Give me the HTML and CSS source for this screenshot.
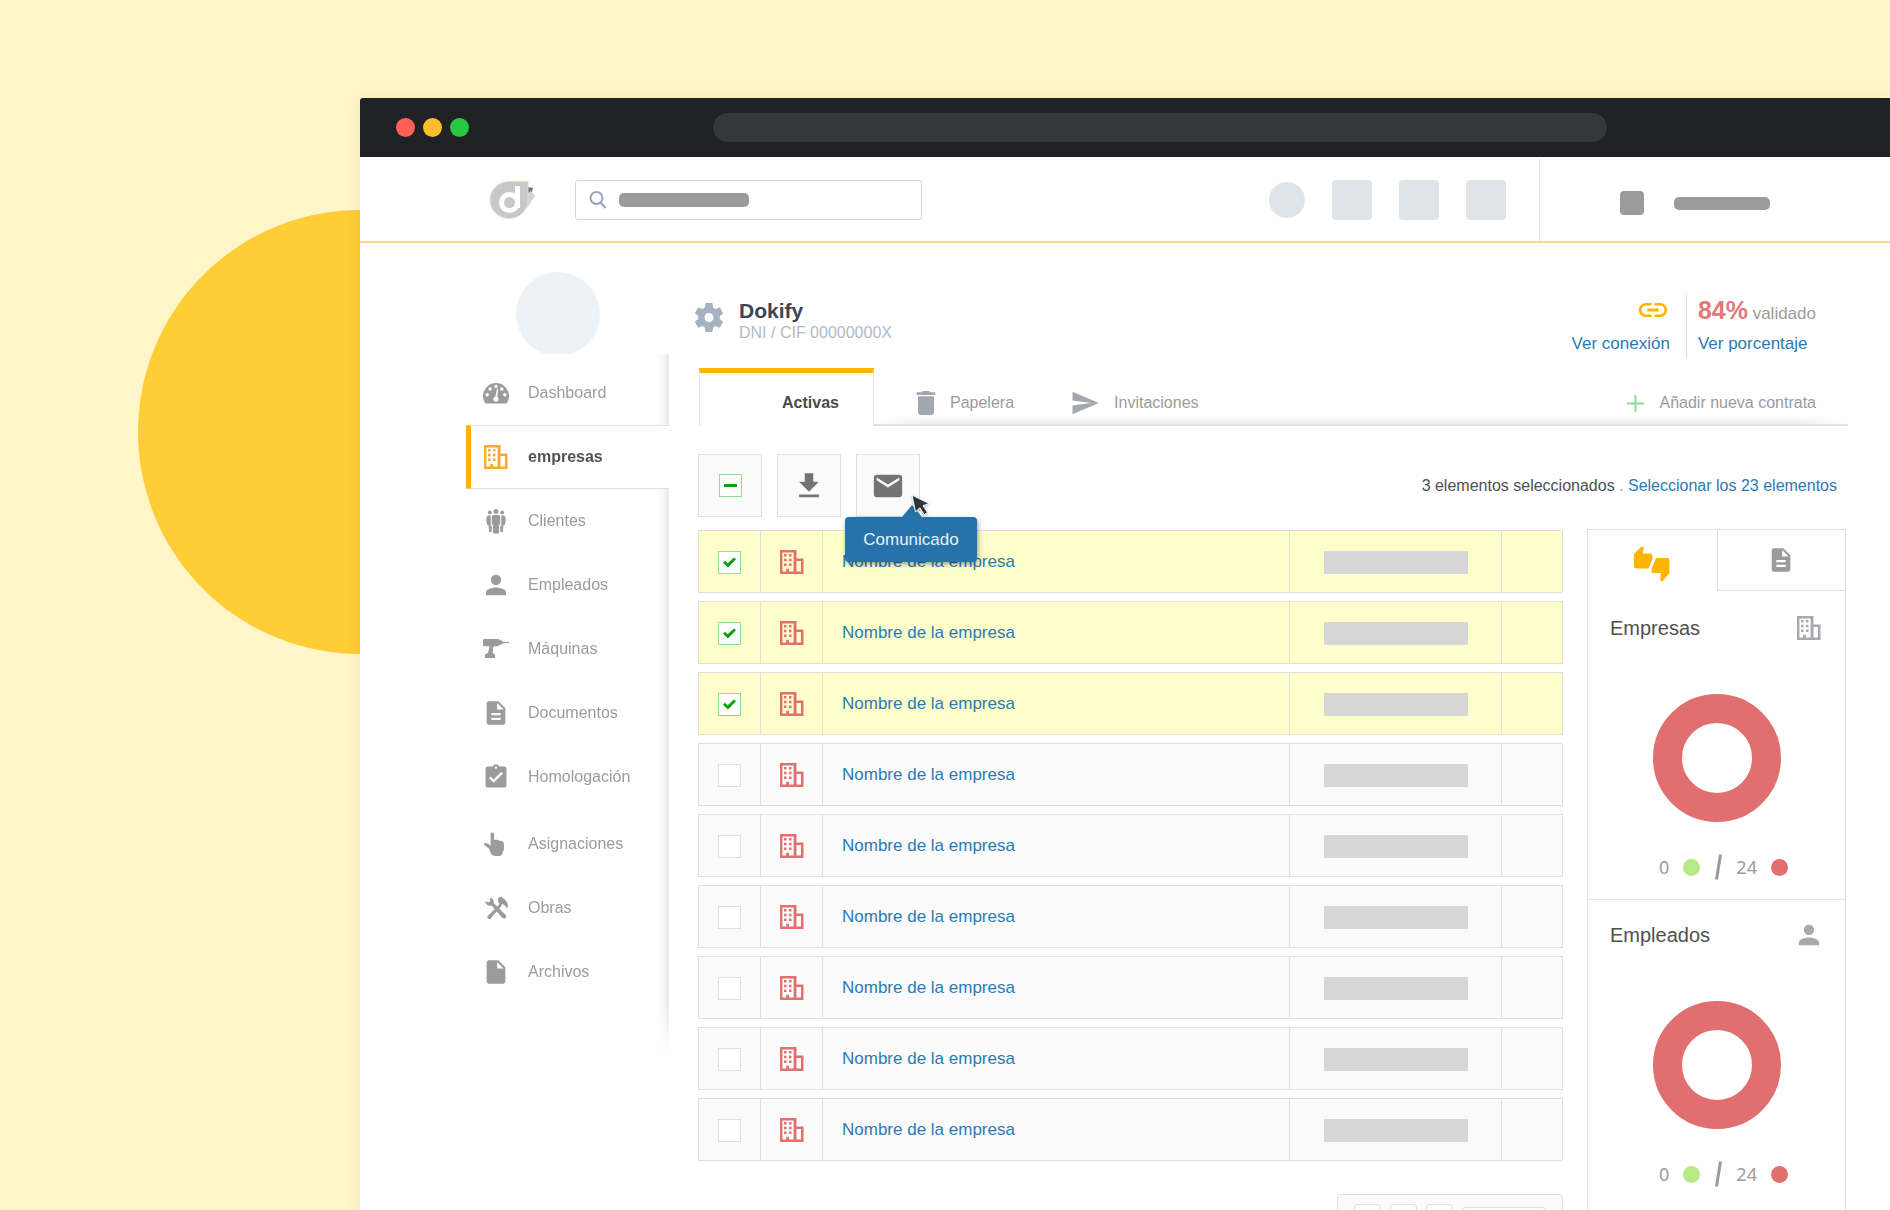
FILE: index.html
```html
<!DOCTYPE html>
<html lang="es">
<head>
  <meta charset="UTF-8">
  <meta name="viewport" content="width=device-width, initial-scale=1.0">
  <title>Dokify - Empresas</title>
  <link rel="stylesheet" href="styles.css">
</head>
<body>
  <!-- Icon sprite -->
  <svg class="sprite" aria-hidden="true">
    <symbol id="i-building" viewBox="-2 -2 28 28">
      <path fill-rule="evenodd" d="M0 0h16.500v8.500h7V24H0zM2.400 2.400v19.200h3.800v-2.800h2.800v2.800h4.600V2.400zM16.500 11v10.600H21V11z"/>
      <path d="M4 4h2.500v2.500H4zM9 4h2.500v2.500H9zM4 8.800h2.500v2.500H4zM9 8.800h2.500v2.500H9zM4 13.600h2.500v2.500H4zM9 13.600h2.500v2.500H9z"/>
    </symbol>
    <symbol id="i-gauge" viewBox="0 0 28 28">
      <path fill-rule="evenodd" d="M3.300 24.500A13 13 0 1 1 24.700 24.500zM14 5.800a1.700 1.700 0 1 0 .01 0zM8.200 8.300a1.700 1.700 0 1 0 .01 0zM19.800 8.300a1.700 1.700 0 1 0 .01 0zM5.200 14a1.700 1.700 0 1 0 .01 0zM22.800 14a1.700 1.700 0 1 0 .01 0zM15 10l-1.700 7.700a2.600 2.600 0 1 0 2 .3l.9-7.800z"/>
    </symbol>
    <symbol id="i-group" viewBox="0 0 28 28">
      <circle cx="14" cy="4.500" r="2.500"/><circle cx="7.800" cy="5.500" r="1.900"/><circle cx="20.200" cy="5.500" r="1.900"/>
      <path d="M11.500 8h5q1.700 0 1.700 1.700V17q0 1-1.100 1v7.500q0 1-1 1H11.900q-1 0-1-1V18q-1.100 0-1.100-1V9.700Q9.800 8 11.500 8zM6.500 8.500h2.200v9.800l1 .9V25H7.200L6.500 18H5.300q-1-3.500-1-7 0-2.500 2.200-2.500zM21.500 8.500h-2.200v9.800l-1 .9V25h2.500l.7-7h1.200q1-3.500 1-7 0-2.500-2.200-2.500z"/>
    </symbol>
    <symbol id="i-person" viewBox="1 1 22 22">
      <path d="M12 12c2.210 0 4-1.790 4-4s-1.790-4-4-4-4 1.790-4 4 1.790 4 4 4zm0 2c-2.670 0-8 1.340-8 4v2h16v-2c0-2.660-5.330-4-8-4z"/>
    </symbol>
    <symbol id="i-drill" viewBox="0 0 28 28">
      <path d="M1 5q0-1 1-1h14.500q.8 0 .8 1l3 .6v1.100l6.700.4v.8l-6.700.4v1.100l-3 .4q-.2 1.400-1.200 1.400h-4.300l-1.200 2 .6 1.700-.6 3.200 2.400 1.400V23H3v-3.500l2.800-1.400 1-3.100.6-3.800H2q-1 0-1-1z"/>
    </symbol>
    <symbol id="i-doc" viewBox="0 0 24 24">
      <path d="M14 2H6c-1.100 0-1.990.9-1.990 2L4 20c0 1.100.89 2 1.990 2H18c1.100 0 2-.9 2-2V8l-6-6zm2 16H8v-2h8v2zm0-4H8v-2h8v2zm-3-5V3.500L18.500 9H13z"/>
    </symbol>
    <symbol id="i-clipboard" viewBox="0 0 24 24">
      <path d="M19 3h-4.180C14.400 1.840 13.300 1 12 1c-1.300 0-2.400.84-2.820 2H5c-1.100 0-2 .9-2 2v14c0 1.100.9 2 2 2h14c1.100 0 2-.9 2-2V5c0-1.100-.9-2-2-2zm-7 0c.55 0 1 .45 1 1s-.45 1-1 1-1-.45-1-1 .45-1 1-1zm-2 14l-4-4 1.410-1.410L10 14.170l6.590-6.590L18 9l-8 8z"/>
    </symbol>
    <symbol id="i-hand" viewBox="0 0 28 28">
      <path d="M8.600 3.300q1.700-1.600 3.300 0l.3 6.700q3.800-.6 5.300.8 4.300-.2 4.300 2.600.7 6-1 8.600-.5 4-3.800 4h-4.500q-2.700-.6-4-3.500l-1.500-4L2 15q-.5-2 1.500-2 2.500.2 5.100 2.500z"/>
    </symbol>
    <symbol id="i-tools" viewBox="0 0 28 28">
      <path d="M3 7.200l3.300 1.300 1.900-1.500-.3-3.300q3 .1 3.800 2.500.4 1.500-.2 2.800L24 21.300q.8 2.400-1.500 3.300-1.300 0-2-.7L9.600 11.500Q4.500 12.500 3 7.200zM16 5l1-1.800 2.500-.7 1 1.500q4.500 2 5.500 7.500l-1.200 3q-1.500-3.500-4-4.500l-1.500 1.300-3-2.600zM17.800 9.700l2 1.800L8.200 25q-2.800.6-3-2.200z"/>
    </symbol>
    <symbol id="i-file" viewBox="0 0 24 24">
      <path d="M6 2c-1.100 0-1.990.9-1.990 2L4 20c0 1.100.89 2 1.990 2H18c1.100 0 2-.9 2-2V8l-6-6H6zm7 7V3.500L18.500 9H13z"/>
    </symbol>
    <symbol id="i-gear" viewBox="2 2 20 20">
      <path d="M19.140 12.940c.04-.3.060-.61.060-.94s-.02-.64-.07-.94l2.030-1.580c.18-.14.23-.41.120-.61l-1.920-3.320c-.12-.22-.37-.29-.59-.22l-2.390.96c-.5-.38-1.030-.7-1.620-.94L14.400 2.810c-.04-.24-.24-.41-.48-.41h-3.840c-.24 0-.43.17-.47.41L9.250 5.350c-.59.24-1.130.57-1.620.94l-2.390-.96c-.22-.08-.47 0-.59.22L2.740 8.870c-.12.21-.08.470.12.610l2.030 1.580c-.05.3-.09.63-.09.94s.02.64.07.94l-2.030 1.580c-.18.140-.23.410-.12.610l1.920 3.320c.12.220.37.290.59.220l2.390-.96c.5.380 1.030.7 1.620.94l.36 2.540c.05.240.24.410.48.410h3.840c.24 0 .44-.17.47-.41l.36-2.540c.59-.24 1.130-.56 1.620-.94l2.390.96c.22.080.47 0 .59-.22l1.920-3.320c.12-.22.070-.47-.12-.61l-2.010-1.580zM12 15c-1.650 0-3-1.350-3-3s1.350-3 3-3 3 1.350 3 3-1.350 3-3 3z"/>
    </symbol>
    <symbol id="i-trash" viewBox="0 0 24 24">
      <path d="M6 19c0 1.100.9 2 2 2h8c1.100 0 2-.9 2-2V7H6v12zM19 4h-3.500l-1-1h-5l-1 1H5v2h14V4z"/>
    </symbol>
    <symbol id="i-send" viewBox="0 0 24 24">
      <path d="M2.010 21L23 12 2.010 3 2 10l15 2-15 2z"/>
    </symbol>
    <symbol id="i-download" viewBox="0 0 24 24">
      <path d="M19 9h-4V3H9v6H5l7 7 7-7zM5 18v2h14v-2H5z"/>
    </symbol>
    <symbol id="i-mail" viewBox="0 0 24 24">
      <path d="M20 4H4c-1.100 0-1.990.9-1.990 2L2 18c0 1.100.9 2 2 2h16c1.100 0 2-.9 2-2V6c0-1.100-.9-2-2-2zm0 4l-8 5-8-5V6l8 5 8-5v2z"/>
    </symbol>
    <symbol id="i-link" viewBox="0 0 24 24">
      <path d="M3.900 12c0-1.710 1.390-3.100 3.100-3.100h4V7H7c-2.760 0-5 2.240-5 5s2.240 5 5 5h4v-1.900H7c-1.710 0-3.100-1.390-3.100-3.100zM8 13h8v-2H8v2zm9-6h-4v1.900h4c1.710 0 3.100 1.390 3.100 3.100s-1.390 3.100-3.100 3.100h-4V17h4c2.760 0 5-2.240 5-5s-2.240-5-5-5z"/>
    </symbol>
    <symbol id="i-thumbs" viewBox="0 0 24 24">
      <path d="M12 6c0-.55-.45-1-1-1H5.820l.66-3.180.02-.23c0-.31-.13-.59-.33-.8L5.380 0 .44 4.940C.17 5.210 0 5.590 0 6v7.500c0 .83.67 1.500 1.500 1.500h7.250c.62 0 1.150-.38 1.380-.91l2-5.290c.07-.17.11-.36.11-.55V6zm10.500 2h-6.750c-.62 0-1.150.38-1.380.91l-2.600 6.290c-.07.17-.11.36-.11.55V17c0 .55.45 1 1 1h5.180l-.3 4.180-.02.24c0 .31.13.59.33.8l.79.78 4.580-5.440c.27-.27.44-.65.44-1.060v-8c0-.83-.67-1.500-1.500-1.500z"/>
    </symbol>
  </svg>

  <div class="hero">
    <div class="sun"></div>

    <div class="window">
      <div class="titlebar">
        <div class="dots">
          <span class="dot dot-red"></span>
          <span class="dot dot-yellow"></span>
          <span class="dot dot-green"></span>
        </div>
        <div class="address"></div>
      </div>

      <header class="topbar">
        <a href="#" class="logo" aria-label="Dokify">
          <svg width="46" height="40" viewBox="0 0 46 40">
            <path fill="#747474" d="M39 7l5 1-1 4-4 2z"/>
            <path fill="#d2d2d2" d="M39 13l3-2 4 5-8 12z"/>
            <path fill="#c8c8c8" stroke="#e6dfc6" d="M19.500 1.500H39V20A19 18.500 0 1 1 19.500 1.500z"/>
            <circle cx="20.500" cy="22.500" r="8" fill="none" stroke="#fff" stroke-width="5"/>
            <rect x="26" y="6" width="5" height="22" fill="#fff"/>
          </svg>
        </a>
        <div class="search">
          <svg width="18" height="20" viewBox="0 0 18 20">
            <circle cx="7.500" cy="8" r="6"/><path d="M11.500 12.500l5 5.500"/>
          </svg>
          <span class="search-text"></span>
          <input type="text" aria-label="Buscar">
        </div>
        <div class="shortcuts">
          <span class="shortcut round"></span>
          <span class="shortcut"></span>
          <span class="shortcut"></span>
          <span class="shortcut"></span>
        </div>
        <div class="account">
          <span class="account-icon"></span>
          <span class="account-name"></span>
        </div>
      </header>

      <div class="layout">
        <aside class="sidebar">
          <div class="avatar"></div>
          <nav class="menu">
            <a href="#"><svg><use href="#i-gauge"/></svg>Dashboard</a>
            <a href="#" class="active"><svg><use href="#i-building"/></svg>empresas</a>
            <a href="#"><svg><use href="#i-group"/></svg>Clientes</a>
            <a href="#"><svg><use href="#i-person"/></svg>Empleados</a>
            <a href="#"><svg><use href="#i-drill"/></svg>Máquinas</a>
            <a href="#"><svg><use href="#i-doc"/></svg>Documentos</a>
            <a href="#"><svg><use href="#i-clipboard"/></svg>Homologación</a>
            <a href="#" class="group-start"><svg><use href="#i-hand"/></svg>Asignaciones</a>
            <a href="#"><svg><use href="#i-tools"/></svg>Obras</a>
            <a href="#"><svg><use href="#i-file"/></svg>Archivos</a>
          </nav>
        </aside>

        <main class="main">
          <div class="company">
            <svg class="gear"><use href="#i-gear"/></svg>
            <div class="company-name">
              <h1>Dokify</h1>
              <p>DNI / CIF 00000000X</p>
            </div>
            <div class="stats">
              <div class="stat connection">
                <svg><use href="#i-link"/></svg>
                <a href="#">Ver conexión</a>
              </div>
              <div class="stat percent">
                <p><strong>84%</strong> validado</p>
                <a href="#">Ver porcentaje</a>
              </div>
            </div>
          </div>

          <div class="tabs">
            <a href="#" class="tab-active">Activas</a>
            <div class="tabs-rest">
              <a href="#" class="tab trash"><svg><use href="#i-trash"/></svg>Papelera</a>
              <a href="#" class="tab send"><svg><use href="#i-send"/></svg>Invitaciones</a>
              <a href="#" class="tab add">
                <svg viewBox="0 0 17 17"><path d="M8.500 0v17M0 8.500h17"/></svg>Añadir nueva contrata
              </a>
            </div>
          </div>

          <div class="toolbar">
            <label class="tool"><input type="checkbox" class="check partial" checked aria-label="Seleccionar todo"></label>
            <button type="button" class="tool" aria-label="Descargar"><svg><use href="#i-download"/></svg></button>
            <div class="tool-wrap">
              <button type="button" class="tool" aria-label="Comunicado"><svg><use href="#i-mail"/></svg></button>
              <div class="tooltip" role="tooltip">Comunicado</div>
              <svg class="cursor" viewBox="0 0 20 24"><path d="M1 1l17 8.500-6 2.200 4.500 6.800-3.300 2.200-4.400-7-4.300 4.500z"/></svg>
            </div>
            <p class="selection">3 elementos seleccionados <span>.</span> <a href="#">Seleccionar los 23 elementos</a></p>
          </div>

          <div class="content">
            <div class="list">
              <table class="companies">
                <colgroup>
                  <col class="col-check"><col class="col-icon"><col><col class="col-bar"><col class="col-end">
                </colgroup>
                <tbody>
                  <tr class="selected">
                    <td class="low"><input type="checkbox" class="check" checked aria-label="Seleccionar empresa"></td>
                    <td><svg><use href="#i-building"/></svg></td>
                    <td class="name"><a href="#">Nombre de la empresa</a></td>
                    <td class="low"><span class="bar"></span></td>
                    <td></td>
                  </tr>
                  <tr class="selected">
                    <td class="low"><input type="checkbox" class="check" checked aria-label="Seleccionar empresa"></td>
                    <td><svg><use href="#i-building"/></svg></td>
                    <td class="name"><a href="#">Nombre de la empresa</a></td>
                    <td class="low"><span class="bar"></span></td>
                    <td></td>
                  </tr>
                  <tr class="selected">
                    <td class="low"><input type="checkbox" class="check" checked aria-label="Seleccionar empresa"></td>
                    <td><svg><use href="#i-building"/></svg></td>
                    <td class="name"><a href="#">Nombre de la empresa</a></td>
                    <td class="low"><span class="bar"></span></td>
                    <td></td>
                  </tr>
                  <tr>
                    <td class="low"><input type="checkbox" class="check" aria-label="Seleccionar empresa"></td>
                    <td><svg><use href="#i-building"/></svg></td>
                    <td class="name"><a href="#">Nombre de la empresa</a></td>
                    <td class="low"><span class="bar"></span></td>
                    <td></td>
                  </tr>
                  <tr>
                    <td class="low"><input type="checkbox" class="check" aria-label="Seleccionar empresa"></td>
                    <td><svg><use href="#i-building"/></svg></td>
                    <td class="name"><a href="#">Nombre de la empresa</a></td>
                    <td class="low"><span class="bar"></span></td>
                    <td></td>
                  </tr>
                  <tr>
                    <td class="low"><input type="checkbox" class="check" aria-label="Seleccionar empresa"></td>
                    <td><svg><use href="#i-building"/></svg></td>
                    <td class="name"><a href="#">Nombre de la empresa</a></td>
                    <td class="low"><span class="bar"></span></td>
                    <td></td>
                  </tr>
                  <tr>
                    <td class="low"><input type="checkbox" class="check" aria-label="Seleccionar empresa"></td>
                    <td><svg><use href="#i-building"/></svg></td>
                    <td class="name"><a href="#">Nombre de la empresa</a></td>
                    <td class="low"><span class="bar"></span></td>
                    <td></td>
                  </tr>
                  <tr>
                    <td class="low"><input type="checkbox" class="check" aria-label="Seleccionar empresa"></td>
                    <td><svg><use href="#i-building"/></svg></td>
                    <td class="name"><a href="#">Nombre de la empresa</a></td>
                    <td class="low"><span class="bar"></span></td>
                    <td></td>
                  </tr>
                  <tr>
                    <td class="low"><input type="checkbox" class="check" aria-label="Seleccionar empresa"></td>
                    <td><svg><use href="#i-building"/></svg></td>
                    <td class="name"><a href="#">Nombre de la empresa</a></td>
                    <td class="low"><span class="bar"></span></td>
                    <td></td>
                  </tr>
                </tbody>
              </table>

              <div class="pagination">
                <button type="button" aria-label="Primera"></button>
                <button type="button" aria-label="Anterior"></button>
                <button type="button" aria-label="Siguiente"></button>
                <select aria-label="Página"></select>
              </div>
            </div>

            <aside class="panel">
              <div class="panel-tabs">
                <button type="button" class="current" aria-label="Validación"><svg><use href="#i-thumbs"/></svg></button>
                <button type="button" aria-label="Documentos"><svg><use href="#i-doc"/></svg></button>
              </div>
              <section class="chart">
                <h2>Empresas <svg><use href="#i-building"/></svg></h2>
                <svg class="donut" viewBox="0 0 128 128"><circle cx="64" cy="64" r="49.500"/></svg>
                <div class="legend">
                  <span>0</span><i class="ok"></i>
                  <svg viewBox="0 0 8 28"><path d="M6.500 1.500l-4 25"/></svg>
                  <span>24</span><i class="ko"></i>
                </div>
              </section>
              <section class="chart">
                <h2>Empleados <svg><use href="#i-person"/></svg></h2>
                <svg class="donut" viewBox="0 0 128 128"><circle cx="64" cy="64" r="49.500"/></svg>
                <div class="legend">
                  <span>0</span><i class="ok"></i>
                  <svg viewBox="0 0 8 28"><path d="M6.500 1.500l-4 25"/></svg>
                  <span>24</span><i class="ko"></i>
                </div>
              </section>
            </aside>
          </div>
        </main>
      </div>
    </div>
  </div>
</body>
</html>
```
FILE: styles.css
```css
* {
  box-sizing: border-box;
}
body {
  margin: 0;
  font-family: "Liberation Sans", Arial, sans-serif;
  font-size: 16px;
  color: #9b9b9b;
}
h1, h2, p {
  margin: 0;
}
a {
  color: #2b7ab5;
  text-decoration: none;
}
button {
  padding: 0;
  font: inherit;
  cursor: pointer;
}
svg {
  display: block;
  flex: none;
  fill: currentColor;
}
.sprite {
  position: absolute;
  width: 0;
  height: 0;
}

/* Backdrop */
.hero {
  position: relative;
  height: 100vh;
  padding: 98px 0 0 360px;
  overflow: hidden;
  background: #fef6c9;
}
.sun {
  position: absolute;
  top: 210px;
  left: 138px;
  width: 444px;
  height: 444px;
  border-radius: 50%;
  background: #ffcd36;
}
.window {
  position: relative;
  min-height: 100%;
  background: #fff;
  border-top-left-radius: 3px;
  box-shadow: 0 0 20px rgba(0, 0, 0, 0.05);
}
.titlebar {
  display: flex;
  align-items: center;
  height: 59px;
  padding: 0 283px 0 36px;
  background: #202125;
  border-top-left-radius: 3px;
}
.dots {
  display: flex;
  gap: 8px;
}
.dot {
  width: 19px;
  height: 19px;
  border-radius: 50%;
}
.dot-red { background: #ff5f57; }
.dot-yellow { background: #ffbd2e; }
.dot-green { background: #28c840; }
.address {
  flex: 1;
  height: 29px;
  margin-left: 244px;
  border-radius: 15px;
  background: #36373b;
}

/* Top bar */
.topbar {
  display: flex;
  align-items: center;
  height: 86px;
  padding: 2px 0 0 129px;
  border-bottom: 2px solid #ffd978;
}
.search {
  display: flex;
  align-items: center;
  width: 347px;
  height: 40px;
  margin-left: 40px;
  padding: 0 0 0 13px;
  border: 1px solid #ccd6e0;
  border-radius: 3px;
}
.search svg {
  fill: none;
  stroke: #93a6bb;
  stroke-width: 2;
}
.search input {
  flex: 1;
  min-width: 0;
  border: 0;
  outline: 0;
  background: none;
}
.search-text {
  width: 130px;
  height: 14px;
  margin-left: 12px;
  border-radius: 5px;
  background: #9b9b9b;
}
.shortcuts {
  display: flex;
  align-items: center;
  gap: 27px;
  margin-left: auto;
  padding-right: 33px;
}
.shortcut {
  width: 40px;
  height: 40px;
  border-radius: 4px;
  background: #dfe4e8;
}
.shortcut.round {
  width: 36px;
  height: 36px;
  border-radius: 50%;
}
.account {
  display: flex;
  align-items: center;
  gap: 30px;
  width: 351px;
  height: 100%;
  padding: 6px 0 0 80px;
  border-left: 1px solid #d8dfe5;
}
.account-icon {
  width: 24px;
  height: 24px;
  border-radius: 4px;
  background: #9b9b9b;
}
.account-name {
  width: 96px;
  height: 13px;
  border-radius: 5px;
  background: #9b9b9b;
}

/* Sidebar */
.layout {
  display: flex;
}
.sidebar {
  width: 203px;
  margin: 29px 29px 0 106px;
}
.avatar {
  width: 84px;
  height: 84px;
  margin-left: 50px;
  border-radius: 50%;
  background: #edf2f6;
}
.menu {
  margin-top: -2px;
  padding: 7px 0 52px;
  background: linear-gradient(to left, #e8e8e8, #f8f8f8 6px, #fff 14px);
  -webkit-mask-image: linear-gradient(to top, transparent, #000 50px);
  mask-image: linear-gradient(to top, transparent, #000 50px);
}
.menu a {
  display: flex;
  align-items: center;
  gap: 18px;
  height: 64px;
  padding-left: 16px;
  color: #9b9b9b;
}
.menu svg {
  width: 28px;
  height: 28px;
}
.menu a.active {
  padding-left: 11px;
  background: #fff;
  border: solid #e0e0e0;
  border-width: 1px 0;
  border-left: 5px solid #ffb400;
  color: #4f5358;
  font-weight: bold;
}
.menu a.active svg {
  color: #fba92c;
}
.menu a.group-start {
  margin-top: 3px;
}

/* Company header */
.main {
  flex: 1;
  min-width: 0;
  padding: 50px 42px 0 0;
}
.company {
  display: flex;
  align-items: flex-start;
  height: 66px;
  padding-right: 32px;
}
.gear {
  width: 30px;
  height: 31px;
  margin: 9px 15px 0 -4px;
  color: #a5b2bf;
}
.company-name {
  padding-top: 6px;
}
.company-name h1 {
  font-size: 21px;
  line-height: 24px;
  color: #3b4652;
}
.company-name p {
  line-height: 20px;
  color: #afbac7;
}
.stats {
  display: flex;
  margin-left: auto;
  font-size: 17px;
}
.stat {
  height: 66px;
  line-height: 34px;
}
.stat svg {
  width: 34px;
  height: 34px;
  margin-left: auto;
  color: #ffb400;
}
.connection {
  padding-right: 16px;
}
.percent {
  padding-left: 11px;
  border-left: 1px solid #e0e0e0;
}
.percent p {
  height: 34px;
}
.percent strong {
  font-size: 25px;
  color: #e57878;
}

/* Tabs */
.tabs {
  display: flex;
  height: 58px;
  margin: 9px 0 0 1px;
}
.tab-active {
  display: flex;
  align-items: center;
  width: 175px;
  padding: 6px 0 0 82px;
  border: solid #e4e4e4;
  border-width: 0 1px;
  border-top: 5px solid #ffb400;
  color: #4a4a4a;
  font-weight: bold;
}
.tabs-rest {
  display: flex;
  align-items: center;
  flex: 1;
  padding: 14px 32px 0 36px;
  border-bottom: 2px solid #e2e2e2;
  background:
    linear-gradient(to right, #fff, transparent 50px, transparent calc(100% - 50px), #fff),
    linear-gradient(to top, #ededed, #fff) bottom / 100% 9px no-repeat;
}
.tab {
  display: flex;
  align-items: center;
  gap: 8px;
  color: #9b9b9b;
}
.tab svg {
  width: 32px;
  height: 32px;
  color: #a3a8b0;
}
.tab.send {
  gap: 14px;
  margin-left: 56px;
}
.tab.send svg {
  width: 30px;
}
.tab.add {
  gap: 15px;
  margin-left: auto;
}
.tab.add svg {
  width: 17px;
  height: 17px;
  stroke: #8fdc8f;
  stroke-width: 2;
}

/* Toolbar */
.toolbar {
  display: flex;
  align-items: center;
  gap: 15px;
  margin-top: 28px;
  padding-right: 11px;
}
.tool {
  display: flex;
  align-items: center;
  justify-content: center;
  width: 64px;
  height: 63px;
  border: 1px solid #dfdfdf;
  background: #fbfbfb;
  color: #747474;
}
.tool svg {
  width: 34px;
  height: 34px;
}
.tool-wrap {
  position: relative;
}
.tooltip {
  position: absolute;
  z-index: 1;
  top: 63px;
  left: -11px;
  width: 132px;
  border-radius: 4px;
  background: #2672ab;
  box-shadow: 1px 2px 5px rgba(0, 0, 0, 0.4);
  color: #e8f1f8;
  font-size: 17px;
  line-height: 45px;
  text-align: center;
}
.tooltip::before {
  content: "";
  position: absolute;
  bottom: 100%;
  left: 57px;
  border: solid transparent;
  border-width: 0 10px 12px;
  border-bottom-color: #2672ab;
}
.cursor {
  position: absolute;
  z-index: 2;
  top: 40px;
  left: 55px;
  width: 20px;
  height: 24px;
  fill: #2f3237;
  stroke: #fff;
  filter: drop-shadow(0 1px 1px rgba(0, 0, 0, 0.3));
}
.selection {
  margin-left: auto;
  color: #4f4f4f;
}
.selection span {
  color: #9b9b9b;
}
.check {
  position: relative;
  display: block;
  width: 23px;
  height: 23px;
  margin: 0;
  border: 1px solid #dedede;
  background: #fff;
  appearance: none;
}
.check:checked {
  border-color: #93dc93;
}
.check:checked::before {
  content: "";
  position: absolute;
  inset: 5px 4px;
  background: #119e11;
  clip-path: polygon(0 52%, 15% 34%, 36% 56%, 84% 4%, 100% 20%, 38% 96%);
}
.check.partial::before {
  inset: 9px 4px;
  clip-path: none;
}

/* Company list */
.content {
  display: flex;
  align-items: flex-start;
  gap: 24px;
  padding-right: 2px;
}
.list {
  flex: 1;
  min-width: 0;
  padding-top: 5px;
}
.companies {
  width: 100%;
  table-layout: fixed;
  border-collapse: separate;
  border-spacing: 0 8px;
}
.col-check { width: 62px; }
.col-icon { width: 62px; }
.col-bar { width: 212px; }
.col-end { width: 62px; }
.companies td {
  height: 63px;
  padding: 0;
  border: solid #dfdfdf;
  border-width: 1px 0 1px 1px;
  background: #fbfbfb;
}
.companies td:last-child {
  border-right-width: 1px;
}
.companies .selected td {
  background: #ffffcb;
}
.companies td.low {
  padding-top: 2px;
}
.companies td.name {
  padding-left: 19px;
  font-size: 17px;
}
.companies .check {
  margin: 0 auto;
}
.companies svg {
  width: 28px;
  height: 28px;
  margin: 0 auto;
  color: #e27070;
}
.bar {
  display: block;
  width: 144px;
  height: 23px;
  margin: 0 auto;
  background: #d7d7d7;
}
.pagination {
  display: flex;
  gap: 9px;
  width: 226px;
  margin: 25px 0 0 auto;
  padding: 9px 16px;
  border: 1px solid #dfdfdf;
  border-radius: 4px;
  background: #fbfbfb;
}
.pagination button {
  width: 27px;
  height: 34px;
  border: 1px solid #dfdfdf;
  border-radius: 4px;
  background: #fff;
}
.pagination select {
  flex: 1;
  min-width: 0;
  margin-top: 3px;
  border: 1px solid #dfdfdf;
  border-radius: 4px;
  background: #fff;
  appearance: none;
}

/* Side panel */
.panel {
  width: 259px;
  margin-top: 12px;
  padding-bottom: 24px;
  border: 1px solid #dfdfdf;
}
.panel-tabs {
  display: grid;
  grid-template-columns: 1fr 1fr;
  margin-bottom: 2px;
}
.panel-tabs button {
  display: flex;
  align-items: center;
  justify-content: center;
  height: 61px;
  border: solid #dfdfdf;
  border-width: 0 0 1px 1px;
  background: #fff;
  color: #9b9b9b;
}
.panel-tabs .current {
  padding-top: 6px;
  border: 0;
  color: #ffb400;
}
.panel-tabs svg {
  width: 28px;
  height: 28px;
}
.panel-tabs .current svg {
  width: 36px;
  height: 36px;
}
.chart {
  padding: 23px 22px 18px;
  border-bottom: 1px solid #dfdfdf;
}
.chart:last-child {
  border-bottom: 0;
}
.chart h2 {
  display: flex;
  align-items: center;
  justify-content: space-between;
  font-size: 20px;
  font-weight: normal;
  line-height: 24px;
  color: #505050;
}
.chart h2 svg {
  width: 28px;
  height: 28px;
  margin: -2px 0;
  color: #a6a9ae;
}
.donut {
  width: 128px;
  height: 128px;
  margin: 54px auto 31px;
  fill: none;
  stroke: #e16f6f;
  stroke-width: 29;
}
.legend {
  display: flex;
  align-items: center;
  justify-content: center;
  gap: 14px;
  padding-left: 14px;
  font-family: "Noto Sans", sans-serif;
  font-size: 18px;
  line-height: 28px;
}
.legend i {
  width: 17px;
  height: 17px;
  border-radius: 50%;
}
.legend .ok { background: #b8e986; }
.legend .ko { background: #e16f6f; }
.legend svg {
  width: 8px;
  height: 28px;
  stroke: #9b9b9b;
  stroke-width: 3;
}
```
